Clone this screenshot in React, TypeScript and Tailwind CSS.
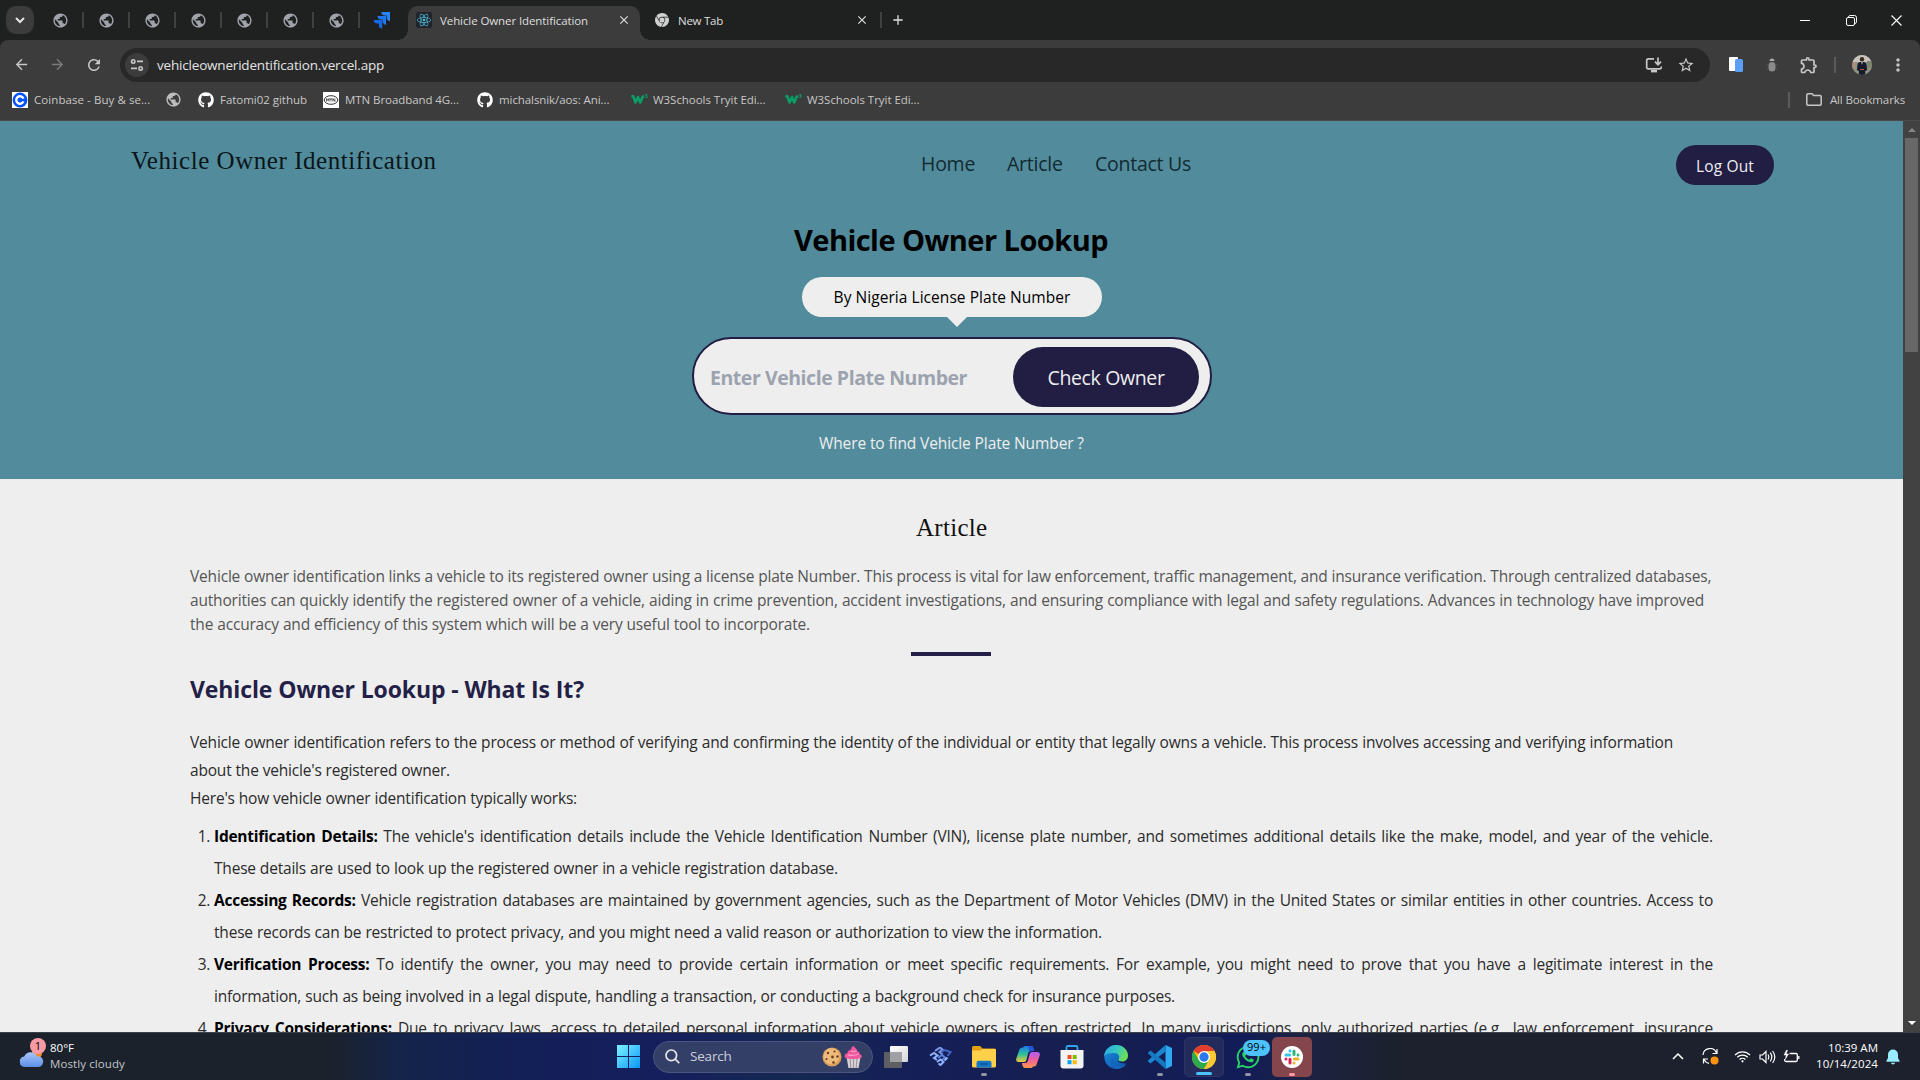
import type { ReactNode } from 'react';
import { MdArrowBack, MdArrowForward, MdRefresh, MdPublic, MdStarBorder, MdOutlineExtension, MdMoreVert, MdClose, MdAdd } from 'react-icons/md';
import { FaGithub, FaWhatsapp } from 'react-icons/fa';
import { SiGooglechrome, SiReact } from 'react-icons/si';

const INK = '#c7c7c7';

/* ---------- small drawings ---------- */

function SiteInfoIcon() {
  return (
    <svg width="14" height="14" viewBox="0 0 14 14" fill="none" stroke={INK} strokeWidth="1.6">
      <circle cx="3.2" cy="3.4" r="1.7" />
      <path d="M7 3.4h6M1 10.4h6" />
      <circle cx="10.6" cy="10.4" r="1.7" />
    </svg>
  );
}

function JiraIcon() {
  return (
    <svg width="18" height="18" viewBox="0 0 18 18">
      <path fill="#2684ff" d="M8.3 1H17v8.9c-2 0-3.3-1.5-3.3-3.2V4.5h-1.9C9.800 4.500 8.300 3 8.300 1z" />
      <path fill="#1f78f5" d="M4.500 5h8.500v8.800c-2 0-3.300-1.500-3.300-3.200V8.500H7.800C5.900 8.500 4.500 7 4.500 5z" />
      <path fill="#1668e3" d="M.7 9h8.500v8.500c-2 0-3.300-1.400-3.300-3.100v-1.900H4C2.100 12.500.7 11 .7 9z" />
    </svg>
  );
}

function InstallIcon() {
  return (
    <svg width="18" height="16" viewBox="0 0 18 16" fill="none" stroke={INK} strokeWidth="1.7">
      <path d="M9 1.900H3a1.300 1.300 0 0 0-1.300 1.300v7.300A1.300 1.300 0 0 0 3 11.800h12a1.300 1.300 0 0 0 1.300-1.300V9.500" />
      <path d="M13 .5v6.800M10 4.700l3 3 3-3" />
      <path d="M6 14.200h6" strokeWidth="2.400" />
    </svg>
  );
}

function W3Icon() {
  return (
    <span className="relative flex w-4 h-4 shrink-0 items-center">
      <svg width="14" height="11" viewBox="0 0 14 11" fill="none" stroke="#0a9d66" strokeWidth="2.600" strokeLinejoin="round">
        <path d="M.3 2.200h2l2.200 6.300 2.500-5.500 2.300 5.500 2.200-5.500 1.500-1.200" />
      </svg>
      <span className="absolute -right-px top-px text-[6px] leading-none font-bold text-[#0a9d66]">3</span>
    </span>
  );
}

function CoinbaseIcon() {
  return (
    <svg width="16" height="16" viewBox="0 0 16 16">
      <rect width="16" height="16" fill="#fff" />
      <circle cx="8" cy="8" r="7.400" fill="#0052ff" />
      <path d="M11.400 6.600A3.700 3.700 0 1 0 11.400 9.400" fill="none" stroke="#fff" strokeWidth="2.400" />
    </svg>
  );
}

function MtnIcon() {
  return (
    <svg width="16" height="16" viewBox="0 0 16 16" fill="none">
      <rect width="16" height="16" fill="#fff" />
      <ellipse cx="8" cy="8" rx="6.800" ry="4.300" stroke="#333" strokeWidth="1" />
      <path d="M3.600 9.500v-3l1.200 1.800L6 6.500v3M6.600 6.900h2.600M7.900 6.900v2.600M9.900 9.500v-3l2 3v-3" stroke="#333" strokeWidth=".8" />
    </svg>
  );
}

function Avatar() {
  return (
    <svg width="20" height="20" viewBox="0 0 20 20" className="rounded-full">
      <rect width="20" height="20" fill="#8f9284" />
      <rect width="20" height="7" fill="#c9c5bd" />
      <rect y="7" width="4" height="6" fill="#a58f7d" />
      <rect x="15" y="6" width="5" height="7" fill="#7f8670" />
      <circle cx="10" cy="4.300" r="2.200" fill="#3a2822" />
      <path d="M5.500 9.500Q6 6.700 10 6.700t4.500 2.800l.7 5.500-2 1V20H6.900v-4l-2-1z" fill="#161b2b" />
      <path d="M9.300 6.800h1.400L10 10z" fill="#eee" />
      <path d="M8 14.500h4" stroke="#b3593a" strokeWidth="1.200" />
    </svg>
  );
}

function Cookie() {
  return (
    <svg width="20" height="20" viewBox="0 0 20 20">
      <circle cx="10" cy="10" r="9.500" fill="#dca05a" />
      <circle cx="9.500" cy="9.300" r="8" fill="#eebb7b" />
      <g fill="#6b3f22">
        <circle cx="6" cy="6" r="1.200" /><circle cx="12.500" cy="4.500" r="1.100" /><circle cx="10.500" cy="10" r="1.400" />
        <circle cx="4.500" cy="12" r="1.100" /><circle cx="15.500" cy="9.500" r="1.200" /><circle cx="11.500" cy="15.500" r="1.300" />
      </g>
    </svg>
  );
}

function Cupcake() {
  return (
    <svg width="19" height="24" viewBox="0 0 19 24">
      <path d="M2.500 12h14l-2 11h-10z" fill="#d9d4d6" />
      <path d="M6 13l.8 10M9.500 13v10M13 13l-.8 10" stroke="#9c979c" strokeWidth="1.200" />
      <path d="M1 12.500C0 9.500 2 8.500 3.500 8.300 3.500 5.500 5.500 4.800 7 4.700 7 2.500 8.500 1 10 1c0 2 3.500 2 3 5 2 .3 3 1.500 2.500 3 2 .5 2.800 2 2 3.500-2 2-14.500 2-16.500 0z" fill="#f0589f" />
      <path d="M4 9.800c3 .8 8 .5 10.500-.8M7 6.200c2 .6 4 .3 5.500-.4" stroke="#ff9cc8" strokeWidth="1.200" fill="none" />
    </svg>
  );
}

function WindowsLogo() {
  return (
    <svg width="23" height="23" viewBox="0 0 23 23">
      <defs>
        <linearGradient id="win" x1="0" y1="0" x2="1" y2="1" gradientUnits="objectBoundingBox">
          <stop offset="0" stopColor="#7ef4ff" /><stop offset="1" stopColor="#0a95fb" />
        </linearGradient>
      </defs>
      <path fill="url(#win)" d="M0 0h11v11H0zM12 0h11v11H12zM0 12h11v11H0zM12 12h11v11H12z" />
    </svg>
  );
}

function TaskViewIcon() {
  return (
    <svg width="24" height="22" viewBox="0 0 24 22">
      <defs>
        <linearGradient id="tv" x1="0" y1="0" x2="1" y2="1"><stop offset="0" stopColor="#fff" /><stop offset="1" stopColor="#d5d5d8" /></linearGradient>
      </defs>
      <rect x="6" y="0" width="18" height="16" rx="1" fill="url(#tv)" />
      <rect x="0" y="6" width="18" height="16" rx="1" fill="#5d5f63" />
      <rect x="6" y="6" width="12" height="10" fill="#a0a1a4" />
    </svg>
  );
}

function DiamondIcon() {
  return (
    <svg width="23" height="19" viewBox="0 0 23 19" fill="none" strokeWidth="2">
      <path d="M6 4l5-3.500 2.500 2-3 2.500 3 2.500" stroke="#7d9bea" />
      <path d="M12 5.500l4-2.500 5.500 2-3 4" stroke="#3f62c4" />
      <path d="M1 8.500l4-2.500 3.500 2.500L5 11l3 2" stroke="#8fb4ff" />
      <path d="M9 11l4-3 3 2.500-3.500 3" stroke="#5b82e0" />
      <path d="M8 15l3.500-2.500L14.500 15l-3 3-2-1.500M15.500 13.500l3-3" stroke="#8fb4ff" />
    </svg>
  );
}

function ExplorerIcon() {
  return (
    <svg width="24" height="22" viewBox="0 0 24 22">
      <path d="M0 1.500Q0 0 1.500 0h6.500l2.500 2.500H22.500Q24 2.500 24 4v5H0z" fill="#e0a010" />
      <path d="M0 4.500h8.500l2-1.500H23q1 0 1 1V20q0 1.500-1.500 1.500h-21Q0 21.500 0 20z" fill="#ffd04a" />
      <path d="M4.500 21.500V17q0-2.300 2.300-2.300h10.400q2.300 0 2.300 2.300v4.500z" fill="#1478c8" />
      <path d="M8 18h8" stroke="#0d4f8b" strokeWidth="1.300" />
    </svg>
  );
}

function CopilotIcon() {
  return (
    <svg width="24" height="22" viewBox="0 0 24 22">
      <defs>
        <linearGradient id="cp1" x1="0" y1="0" x2="0" y2="1"><stop offset="0" stopColor="#1b7ae8" /><stop offset=".5" stopColor="#2bbf9a" /><stop offset="1" stopColor="#f2c83a" /></linearGradient>
        <linearGradient id="cp2" x1="0" y1="0" x2="0" y2="1"><stop offset="0" stopColor="#b05cf0" /><stop offset=".5" stopColor="#f0609a" /><stop offset="1" stopColor="#ff9a4a" /></linearGradient>
      </defs>
      <path d="M7 1.500Q7.600 0 9.300 0H15q1.800 0 2.400 2l.8 3h-3.600q-1.800 0-2.400 2l-2 7.500Q9.600 16 8 16H3Q-.6 16 .3 12.500L3.600 3q.7-1.500 3.400-1.500z" fill="url(#cp1)" />
      <path d="M17 20.500q-.6 1.500-2.300 1.500H9q-1.800 0-2.400-2l-.8-3h3.600q1.800 0 2.400-2l2-7.500Q14.400 6 16 6h5q3.600 0 2.700 3.500L20.400 19q-.7 1.500-3.400 1.500z" fill="url(#cp2)" />
      <path d="M12.200 0H15q1.800 0 2.400 2l.8 3h-3q-1.500 0-2 1.500z" fill="#2356d8" />
    </svg>
  );
}

function StoreIcon() {
  return (
    <svg width="24" height="24" viewBox="0 0 24 24">
      <path d="M6.500 6V2.500Q6.500 1 8 1h8q1.500 0 1.500 1.500V6" fill="none" stroke="#2aa5ee" strokeWidth="1.800" />
      <path d="M.5 5h23v15.500q0 3-3 3h-17q-3 0-3-3z" fill="#f3f3f4" />
      <path fill="#f25022" d="M7.500 10h4v4h-4z" /><path fill="#7fba00" d="M12.700 10h4v4h-4z" />
      <path fill="#00a4ef" d="M7.500 15.200h4v4h-4z" /><path fill="#ffb900" d="M12.700 15.200h4v4h-4z" />
    </svg>
  );
}

function EdgeIcon() {
  return (
    <svg width="24" height="24" viewBox="0 0 24 24">
      <defs>
        <linearGradient id="ed1" x1="0" y1="0" x2="1" y2=".3"><stop offset="0" stopColor="#2aa8e6" /><stop offset=".6" stopColor="#36c8c0" /><stop offset="1" stopColor="#6ade5a" /></linearGradient>
        <linearGradient id="ed2" x1="0" y1="0" x2="1" y2="1"><stop offset="0" stopColor="#1a8fe0" /><stop offset="1" stopColor="#0d4ea6" /></linearGradient>
      </defs>
      <path d="M12 0A12 12 0 1 0 22.500 18.300C20 19 13 18 14.400 14.800L24 11A12 12 0 0 0 12 0z" fill="url(#ed2)" />
      <path d="M0 11.500C.5 4.500 6 0 12 0c7 0 12 5 12 10.500 0 4-3 6-6 6-2.500 0-4-1-3.500-2 2-3 0-6.500-4.500-6.500C5 8 1 9 0 11.500z" fill="url(#ed1)" />
      <path d="M9.500 12.500C8 17 12 21 16.500 21c2 0 4-.7 5.500-1.800C20 22 16 24 12.500 24 8 23.500 6.500 19 7 16c.3-1.800 1.200-3 2.500-3.500z" fill="#1566bd" />
    </svg>
  );
}

function VsCodeIcon() {
  return (
    <svg width="24" height="24" viewBox="0 0 24 24">
      <path d="M17.500 0L24 3v18l-6.500 3z" fill="#2fa8f2" />
      <path d="M17.500 0v6.500L2.500 18.500 0 16.500v-1z" fill="#1b86d0" />
      <path d="M17.500 24v-6.500L2.500 5.500 0 7.500v1z" fill="#1479c0" />
    </svg>
  );
}

function ChromeIcon() {
  return (
    <svg width="24" height="24" viewBox="0 0 24 24">
      <circle cx="12" cy="12" r="12" fill="#fbbc05" />
      <path d="M12 12L1.600 6A12 12 0 0 1 22.400 6z" fill="#e33b2e" />
      <path d="M1.600 6A12 12 0 0 0 12 24l5.200-9L12 12 6.800 15z" fill="#2da94f" />
      <path d="M22.400 6H12v6l5.200 3L12 24A12 12 0 0 0 22.400 6z" fill="#fcc934" />
      <circle cx="12" cy="12" r="6" fill="#fff" />
      <circle cx="12" cy="12" r="4.700" fill="#2a79ee" />
    </svg>
  );
}

function SlackIcon() {
  return (
    <svg width="22" height="22" viewBox="0 0 22 22">
      <circle cx="11" cy="11" r="11" fill="#fff" />
      <g strokeLinecap="round" strokeWidth="3">
        <path d="M5 9h3.600M9 4.800v.1" stroke="#36c5f0" />
        <path d="M13 5v3.600M17 9v.1" stroke="#2eb67d" />
        <path d="M13.300 13H17M13 17v.1" stroke="#ecb22e" />
        <path d="M9 13.300V17M5 13v.1" stroke="#e01e5a" />
      </g>
    </svg>
  );
}

function WeatherIcon() {
  return (
    <svg width="25" height="17" viewBox="0 0 25 17">
      <defs>
        <linearGradient id="cl" x1="0" y1="0" x2="0" y2="1"><stop offset="0" stopColor="#a9c8fb" /><stop offset="1" stopColor="#5d8fe6" /></linearGradient>
      </defs>
      <circle cx="18" cy="3.500" r="5" fill="#f08a24" />
      <path d="M5.500 17A5.300 5.300 0 0 1 5.200 6.500 7 7 0 0 1 18 6.200 5.400 5.400 0 0 1 19.500 17z" fill="url(#cl)" />
    </svg>
  );
}

/* ---------- browser chrome ---------- */

function TabStrip() {
  return (
    <div className="flex h-10 items-center bg-[#1f2121] pl-1.5 text-[#dfdfdf]">
      <div className="flex h-7 w-7 items-center justify-center rounded-[10px] bg-[#3c3c3c]">
        <svg width="10" height="7" viewBox="0 0 10 7" fill="none" stroke="#e3e3e3" strokeWidth="2"><path d="M1 1l4 4 4-4" /></svg>
      </div>
      <div className="flex pl-1">
        {[0, 1, 2, 3, 4, 5, 6].map((i) => (
          <div key={i} className="flex w-[46px] items-center justify-end">
            <MdPublic size={17} color="#a0a4aa" />
            <span className="ml-[13px] h-4 w-0.5 bg-[#3f4040]" />
          </div>
        ))}
      </div>
      <div className="ml-[13px] w-[18px]"><JiraIcon /></div>
      <div className="relative ml-[17px] mt-1.5 flex h-[34px] w-[232px] items-center rounded-t-[10px] bg-[#3c3c3c] pb-1.5 pl-2">
        <span className="absolute -left-2.5 bottom-0 h-2.5 w-2.5 bg-[radial-gradient(circle_at_0_0,#1f2121_9.500px,#3c3c3c_10px)]" />
        <span className="absolute -right-2.5 bottom-0 h-2.5 w-2.5 bg-[radial-gradient(circle_at_100%_0,#1f2121_9.500px,#3c3c3c_10px)]" />
        <span className="flex h-4 w-4 items-center justify-center rounded-xs bg-[#20232a]"><SiReact size={14} color="#52c1de" /></span>
        <span className="mt-px ml-2 w-[177px] whitespace-nowrap text-[11.5px] tracking-[-0.09px]">Vehicle Owner Identification</span>
        <MdClose size={14} />
      </div>
      <div className="ml-[15px] flex w-[226px] items-center">
        <SiGooglechrome size={14} color="#d0d0d0" />
        <span className="mt-0.5 ml-[9px] w-[177px] whitespace-nowrap text-[11.5px] tracking-[-0.25px]">New Tab</span>
        <MdClose size={14} />
      </div>
      <span className="-ml-px h-4 w-0.5 bg-[#3f4040]" />
      <MdAdd size={16} className="ml-2" />
      <div className="ml-auto flex items-center">
        <span className="h-px w-2.5 bg-white" />
        <svg className="ml-9" width="11" height="11" viewBox="0 0 11 11" fill="none" stroke="#fff"><rect x=".5" y="2.500" width="8" height="8" rx="1.500" /><path d="M2.500 2.500V2Q2.700.5 4.200.5H8.500Q10.500.5 10.500 2.500v4.300q0 1.400-1.500 1.700" /></svg>
        <svg className="mr-[18px] ml-[34px]" width="11" height="11" viewBox="0 0 11 11" stroke="#fff" strokeWidth="1.100"><path d="M.5.5l10 10M10.500.5l-10 10" /></svg>
      </div>
    </div>
  );
}

function Toolbar() {
  return (
    <div className="flex h-[46px] items-center rounded-t-lg bg-[#3c3c3c] pt-[3px] pl-[13px]">
      <MdArrowBack size={17} color={INK} />
      <MdArrowForward size={17} color="#7b7b7b" className="ml-[19px]" />
      <MdRefresh size={18} color={INK} className="ml-[19px]" />
      <div className="ml-[17px] mt-px flex h-[34px] w-[1590px] items-center rounded-full bg-[#282828] pl-[5px]">
        <span className="flex h-6 w-6 items-center justify-center rounded-full bg-[#3c3c3c]"><SiteInfoIcon /></span>
        <span className="ml-2 text-[13.5px] tracking-[-0.19px] text-[#e3e3e3]">vehicleowneridentification.vercel.app</span>
        <span className="mr-[14px] ml-auto"><InstallIcon /></span>
        <MdStarBorder size={18} color={INK} className="mr-[15px]" />
      </div>
      <svg className="ml-[19px]" width="14" height="16" viewBox="0 0 14 16"><rect width="9" height="14" rx="1" fill="#fff" /><rect x="6" y="2" width="8" height="13" rx="1.500" fill="#5a9ff5" /></svg>
      <svg className="ml-[22px]" width="14" height="16" viewBox="0 0 14 16"><path d="M4.500 4Q4.500 1.500 7 1.500T9.500 4z" fill="#aaa" /><rect x="3.500" y="5" width="7" height="9.500" rx="3.500" fill="#8a8a8a" /><path d="M1.500 8h2M10.500 8h2M1.500 12h2M10.500 12h2" stroke="#555" /></svg>
      <MdOutlineExtension size={20} color={INK} className="ml-5" />
      <span className="ml-[15px] h-4 w-0.5 bg-[#5b5b5b]" />
      <span className="ml-4"><Avatar /></span>
      <MdMoreVert size={20} color={INK} className="ml-4" />
    </div>
  );
}

function Bookmark({ icon, label, box }: { icon: ReactNode; label: string; box: string }) {
  return (
    <div className={`flex items-center gap-1.5 ${box}`}>
      {icon}
      <span className="mt-px">{label}</span>
    </div>
  );
}

function BookmarksBar() {
  return (
    <div className="flex h-[35px] items-center border-b border-[#4a4a4a] bg-[#3c3c3c] pb-[7px] pl-3 text-[11.5px] whitespace-nowrap text-[#c7c7c7]">
      <Bookmark box="w-[153px] tracking-[0.07px]" icon={<CoinbaseIcon />} label="Coinbase - Buy & se..." />
      <MdPublic size={17} color="#bdbdbd" />
      <Bookmark box="ml-4 w-[125px] tracking-[-0.03px]" icon={<FaGithub size={16} color="#fff" />} label="Fatomi02 github" />
      <Bookmark box="w-[154px] tracking-[-0.07px]" icon={<MtnIcon />} label="MTN Broadband 4G..." />
      <Bookmark box="w-[154px] tracking-[-0.08px]" icon={<FaGithub size={16} color="#fff" />} label="michalsnik/aos: Ani..." />
      <Bookmark box="w-[154px] tracking-[-0.04px]" icon={<W3Icon />} label="W3Schools Tryit Edi..." />
      <Bookmark box="w-[154px] tracking-[-0.04px]" icon={<W3Icon />} label="W3Schools Tryit Edi..." />
      <span className="ml-auto h-4 w-0.5 bg-[#5b5b5b]" />
      <svg className="mr-2 ml-4" width="16" height="13" viewBox="0 0 16 13" fill="none" stroke={INK} strokeWidth="1.500"><path d="M.8 2Q.8.8 2 .8h4l1.700 1.700H14q1.200 0 1.200 1.200V11q0 1.200-1.200 1.200H2Q.8 12.200.8 11z" /></svg>
      <span className="mt-px mr-[15px] tracking-[-0.12px]">All Bookmarks</span>
    </div>
  );
}

/* ---------- page ---------- */

function Line({ w, children }: { w: string; children: ReactNode }) {
  return <span className={`block whitespace-nowrap [text-align-last:justify] ${w}`}>{children}</span>;
}

function Hero() {
  return (
    <section className="flex h-[358px] flex-col bg-[#528c9c] text-black">
      <header className="flex h-16 pl-[131px]">
        <div className="w-[790px] pt-[23px] font-['Liberation_Serif'] text-[25px] leading-[34px] tracking-[0.55px] text-[#0b1518]">Vehicle Owner Identification</div>
        <nav className="flex pt-[29px] text-[19.5px] leading-7 tracking-[-0.25px] text-[#122a31]">
          <span className="w-[86px]">Home</span>
          <span className="w-[88px]">Article</span>
          <span>Contact Us</span>
        </nav>
        <button className="mt-6 mr-[129px] ml-auto h-10 w-[98px] shrink-0 rounded-[20px] bg-[#211d43] pt-[3px] text-[15.5px] font-medium tracking-[0.15px] text-[#eee]">Log Out</button>
      </header>
      <h1 className="mt-[35px] pl-[794px] text-[29px] leading-10 font-bold tracking-[-0.54px]">Vehicle Owner Lookup</h1>
      <div className="relative mt-[17px] ml-[802px] flex h-10 w-[300px] items-center justify-center rounded-[20px] bg-[#eee] pt-0.5 text-[15.5px] font-medium tracking-[0.05px]">
        By Nigeria License Plate Number
        <span className="absolute top-10 left-[145px] border-x-[10px] border-t-[10px] border-x-transparent border-t-[#eee]" />
      </div>
      <div className="mt-5 ml-[692px] flex h-[78px] w-[520px] items-center rounded-[39px] border-2 border-[#211d43] bg-[#eee] pt-px pl-4">
        <span className="w-[303px] pt-[3px] text-[19.5px] font-bold tracking-[-0.45px] whitespace-nowrap text-[#9ca3af]">Enter Vehicle Plate Number</span>
        <button className="h-[60px] w-[186px] rounded-[30px] bg-[#211d43] pt-[3px] text-[19.5px] tracking-[-0.36px] text-[#eee]">Check Owner</button>
      </div>
      <p className="mt-4 ml-[819px] text-[15.5px] leading-6 tracking-[-0.11px] text-[#eee]">Where to find Vehicle Plate Number ?</p>
    </section>
  );
}

const STEPS = [
  {
    title: 'Identification Details:',
    first: "The vehicle's identification details include the Vehicle Identification Number (VIN), license plate number, and sometimes additional details like the make, model, and year of the vehicle.",
    rest: 'These details are used to look up the registered owner in a vehicle registration database.',
    width: 'w-[624px]',
  },
  {
    title: 'Accessing Records:',
    first: 'Vehicle registration databases are maintained by government agencies, such as the Department of Motor Vehicles (DMV) in the United States or similar entities in other countries. Access to',
    rest: 'these records can be restricted to protect privacy, and you might need a valid reason or authorization to view the information.',
    width: 'w-[888px]',
  },
  {
    title: 'Verification Process:',
    first: 'To identify the owner, you may need to provide certain information or meet specific requirements. For example, you might need to prove that you have a legitimate interest in the',
    rest: 'information, such as being involved in a legal dispute, handling a transaction, or conducting a background check for insurance purposes.',
    width: 'w-[961px]',
  },
  {
    title: 'Privacy Considerations:',
    first: 'Due to privacy laws, access to detailed personal information about vehicle owners is often restricted. In many jurisdictions, only authorized parties (e.g., law enforcement, insurance',
    rest: '',
    width: '',
  },
];

function Article() {
  return (
    <section className="h-[553px] overflow-hidden bg-[#eee] pl-[190px] text-[15.5px]">
      <h2 className="mt-[33px] ml-[726px] font-['Liberation_Serif'] text-[25px] leading-8 tracking-[0.3px] text-[#111]">Article</h2>
      <p className="mt-5 leading-6 tracking-[-0.18px] text-[#555]">
        <Line w="w-[1519px]">Vehicle owner identification links a vehicle to its registered owner using a license plate Number. This process is vital for law enforcement, traffic management, and insurance verification. Through centralized databases,</Line>
        <Line w="w-[1514px]">authorities can quickly identify the registered owner of a vehicle, aiding in crime prevention, accident investigations, and ensuring compliance with legal and safety regulations. Advances in technology have improved</Line>
        <Line w="w-[620px]">the accuracy and efficiency of this system which will be a very useful tool to incorporate.</Line>
      </p>
      <div className="mt-4 ml-[721px] h-1 w-20 bg-[#241f47]" />
      <h3 className="mt-[15px] text-[23px] leading-9 font-bold tracking-[-0.11px] text-[#241f47]">Vehicle Owner Lookup - What Is It?</h3>
      <div className="mt-[21px] leading-7 tracking-[-0.19px] text-[#2b2b2b]">
        <Line w="w-[1483px]">Vehicle owner identification refers to the process or method of verifying and confirming the identity of the individual or entity that legally owns a vehicle. This process involves accessing and verifying information</Line>
        <Line w="w-[260px]">about the vehicle's registered owner.</Line>
        <Line w="w-[387px]">Here's how vehicle owner identification typically works:</Line>
      </div>
      <ol className="mt-2 ml-6 w-[1499px] list-decimal leading-8 tracking-[-0.2px] text-[#2b2b2b]">
        {STEPS.map((s) => (
          <li key={s.title}>
            <Line w="w-[1499px]"><b className="font-bold tracking-[-0.25px] text-black">{s.title}</b> {s.first}</Line>
            {s.rest && <Line w={s.width}>{s.rest}</Line>}
          </li>
        ))}
      </ol>
    </section>
  );
}

function Scrollbar() {
  return (
    <div className="flex w-[17px] flex-col items-center bg-[#424242]">
      <span className="mt-[7px] border-x-[4px] border-b-[4px] border-x-transparent border-b-[#868686]" />
      <span className="mt-1.5 h-[214px] w-[13px] bg-[#686868]" />
      <span className="mt-auto mb-[7px] border-x-[4px] border-t-[4px] border-x-transparent border-t-white" />
    </div>
  );
}

/* ---------- taskbar ---------- */

function TaskbarApp({ children, mark, tile }: { children: ReactNode; mark?: string; tile?: string }) {
  return (
    <div className="flex w-11 justify-center">
      <div className={`relative flex h-10 w-10 items-center justify-center rounded-[5px] ${tile ?? ''}`}>
        {children}
        {mark && <span className={`absolute bottom-px h-[3px] rounded-full ${mark}`} />}
      </div>
    </div>
  );
}

function Taskbar() {
  return (
    <div className="flex h-12 items-center border-t border-[#3b4048] bg-[linear-gradient(90deg,#1b222c_0px,#1b222c_330px,#14244a_400px,#131f57_520px,#161f5d_660px,#142850_800px,#151f58_900px,#171f50_1080px,#121c58_1240px,#1c2243_1300px,#1c212d_1400px,#1c212d_100%)] text-[11.5px] text-white">
      <div className="flex w-[617px] items-center pl-[19px]">
        <div className="relative w-[25px] pt-1">
          <WeatherIcon />
          <span className="absolute -top-2 left-[11px] flex h-4 w-4 items-center justify-center rounded-full bg-[#f99aa5] text-[11px] text-black">1</span>
        </div>
        <div className="-mt-0.5 ml-1.5 leading-4">
          <div className="font-medium">80°F</div>
          <div className="tracking-[0.1px] text-[#c3c6ca]">Mostly cloudy</div>
        </div>
      </div>
      <WindowsLogo />
      <div className="ml-[13px] flex h-8 w-[220px] items-center rounded-full border border-[#4b5580] bg-[#343f68] pl-[11px]">
        <svg width="15" height="15" viewBox="0 0 15 15" fill="none" stroke="#e6e6ea" strokeWidth="1.700"><circle cx="6.300" cy="6.300" r="5.300" /><path d="M10.200 10.200l4 4" /></svg>
        <span className="ml-2.5 text-[13.5px] tracking-[-0.2px] text-[#ccd0da]">Search</span>
        <span className="ml-auto"><Cookie /></span>
        <span className="mr-[9px] ml-0.5"><Cupcake /></span>
      </div>
      <div className="ml-px flex">
        <TaskbarApp><TaskViewIcon /></TaskbarApp>
        <TaskbarApp><DiamondIcon /></TaskbarApp>
        <TaskbarApp mark="w-1.5 bg-[#9094a5]"><ExplorerIcon /></TaskbarApp>
        <TaskbarApp><CopilotIcon /></TaskbarApp>
        <TaskbarApp><StoreIcon /></TaskbarApp>
        <TaskbarApp><EdgeIcon /></TaskbarApp>
        <TaskbarApp mark="w-1.5 bg-[#9094a5]"><VsCodeIcon /></TaskbarApp>
        <TaskbarApp mark="w-4 bg-[#4cc2ff]" tile="border border-[#2b3566] bg-[#222b5c]"><ChromeIcon /></TaskbarApp>
        <TaskbarApp mark="w-1.5 bg-[#9094a5]">
          <FaWhatsapp size={26} color="#25d366" />
          <span className="absolute top-[3px] left-[15px] flex h-4 w-[27px] items-center justify-center rounded-full bg-[#4cc2ff] text-[11px] text-black">99+</span>
        </TaskbarApp>
        <TaskbarApp mark="w-1.5 bg-[#ff99a4]" tile="bg-[#84454c]"><SlackIcon /></TaskbarApp>
      </div>
      <div className="ml-auto flex items-center pr-5">
        <svg width="12" height="7" viewBox="0 0 12 7" fill="none" stroke="#fff" strokeWidth="1.500"><path d="M1 6l5-5 5 5" /></svg>
        <svg className="ml-[18px]" width="17" height="17" viewBox="0 0 17 17" fill="none" stroke="#fff" strokeWidth="1.200"><path d="M1 7A7 7 0 0 1 14.500 5M15 1v4.500h-4.500M1.500 15.500V11H6M2 11.500a7 7 0 0 0 5 3.800" /><circle cx="12.500" cy="12.500" r="4" fill="#ff9212" stroke="none" /></svg>
        <svg className="ml-[15px]" width="17" height="13" viewBox="0 0 17 13" fill="none" stroke="#fff" strokeWidth="1.300"><path d="M1 5a10.500 10.500 0 0 1 15 0M3.300 7.300a7.400 7.400 0 0 1 10.400 0M5.600 9.500a4.200 4.200 0 0 1 5.800 0" /><circle cx="8.500" cy="11.300" r="1.100" fill="#fff" stroke="none" /></svg>
        <svg className="ml-2" width="17" height="14" viewBox="0 0 17 14" fill="none" stroke="#fff" strokeWidth="1.200"><path d="M1 5v4h2.500L7 12.500v-11L3.500 5zM9 4.500q1.600 2.500 0 5M11.300 2.700q3 4.300 0 8.600M13.600 1q4.400 6 0 12" /></svg>
        <svg className="ml-[7px]" width="17" height="14" viewBox="0 0 17 14" fill="none" stroke="#fff" strokeWidth="1.300"><path d="M6.500 3.500H13Q14.300 3.500 14.300 5v5q0 1.500-1.300 1.500H3Q1.700 11.500 1.700 10V9M15.800 6v3" /><path d="M3.500 0L1 5h2.200L2.500 9 5.500 4H3.300L4.500 0z" fill="#fff" strokeWidth=".5" /></svg>
        <div className="-mt-px ml-4 text-right leading-4">
          <div>10:39 AM</div>
          <div className="tracking-[0.09px]">10/14/2024</div>
        </div>
        <svg className="ml-2" width="14" height="16" viewBox="0 0 14 16" fill="#99ebff"><path d="M7 .5a5 5 0 0 1 5 5V9l1.700 3q.2.800-.7.800H1q-.9 0-.7-.8L2 9V5.500a5 5 0 0 1 5-5zM4.800 13.800h4.400Q8.600 15.500 7 15.500t-2.200-1.700z" /></svg>
      </div>
    </div>
  );
}

export default function App() {
  return (
    <div className="flex h-[1080px] w-[1920px] flex-col overflow-hidden bg-[#1f2121] font-['Open_Sans',sans-serif]">
      <TabStrip />
      <Toolbar />
      <BookmarksBar />
      <div className="flex h-[911px]">
        <main className="w-[1903px]">
          <Hero />
          <Article />
        </main>
        <Scrollbar />
      </div>
      <Taskbar />
    </div>
  );
}
